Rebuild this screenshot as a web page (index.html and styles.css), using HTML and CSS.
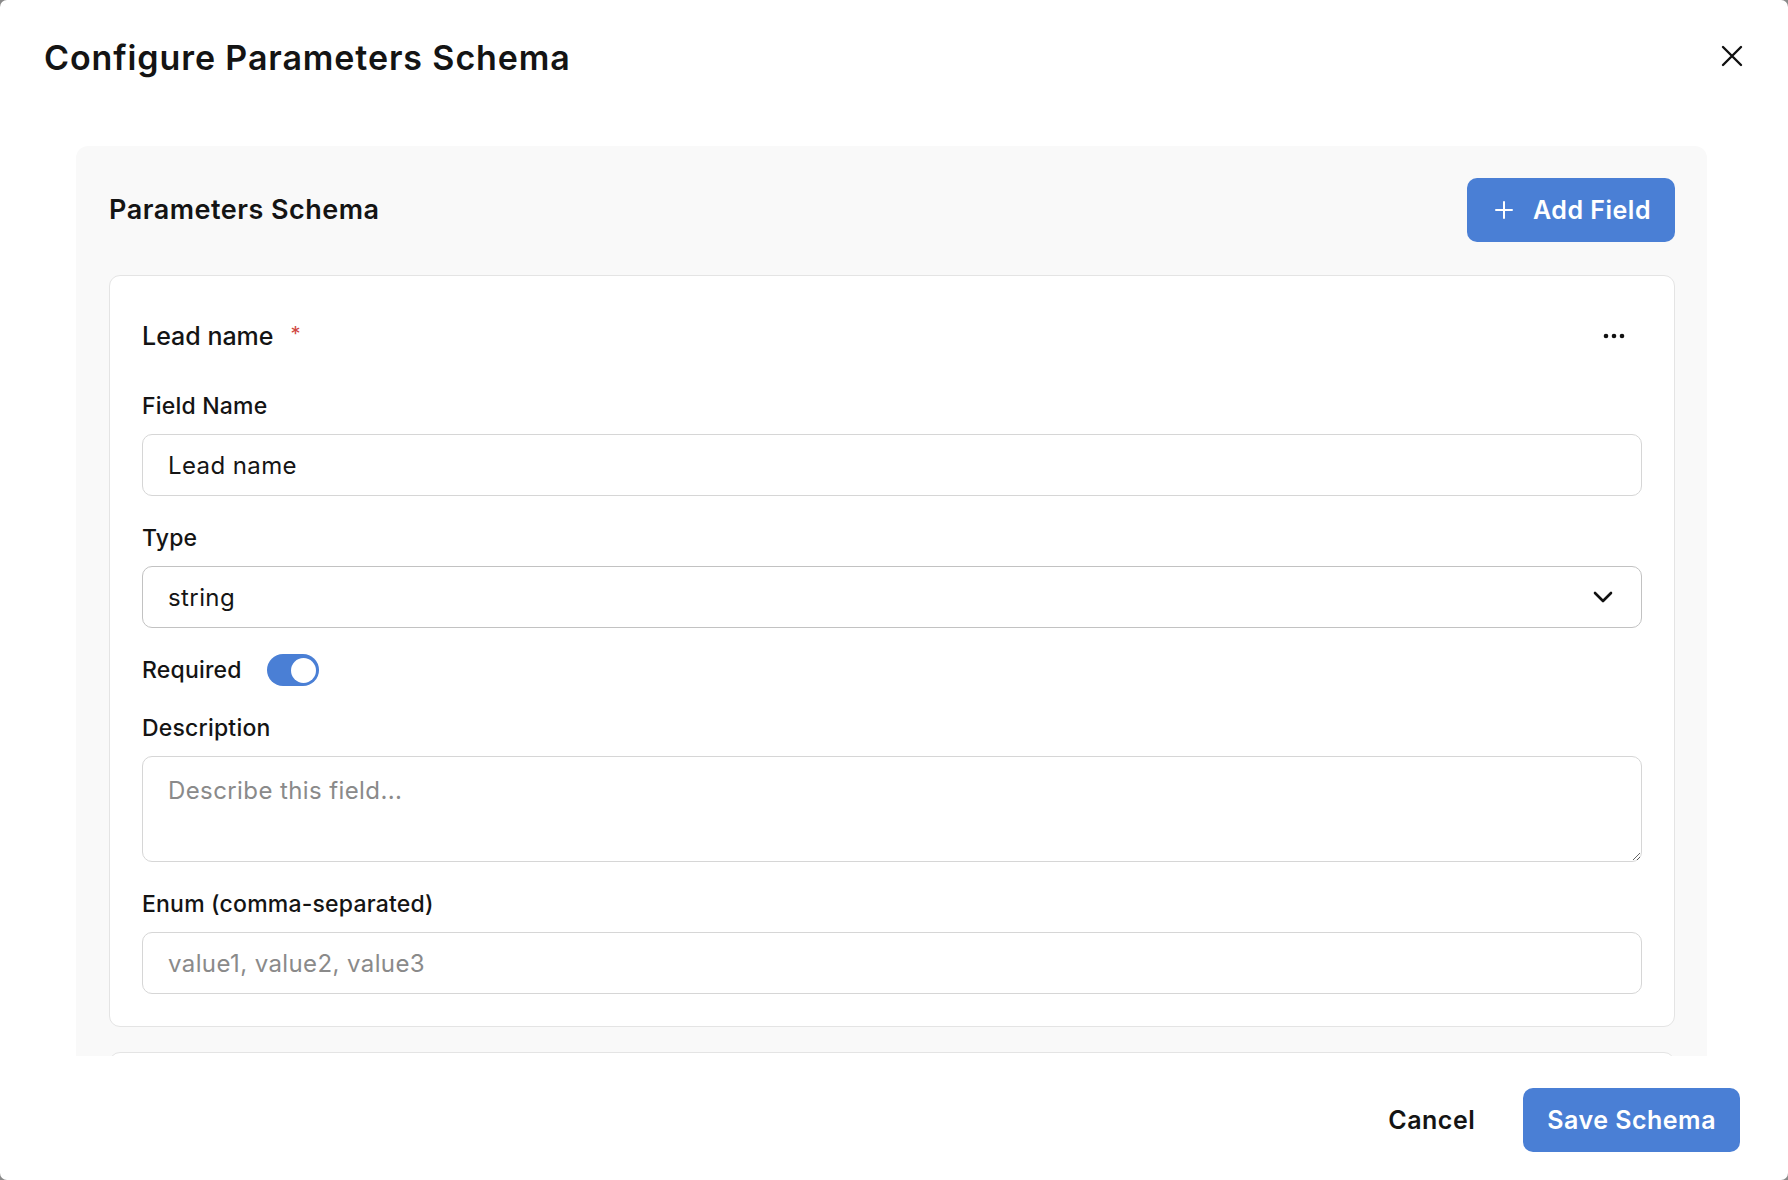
FILE: index.html
```html
<!DOCTYPE html>
<html lang="en">
<head>
<meta charset="utf-8">
<title>Configure Parameters Schema</title>
<link rel="stylesheet" href="styles.css">
</head>
<body>
<div class="modal" role="dialog" aria-labelledby="modal-title">
  <header class="modal-header">
    <h1 id="modal-title" class="modal-title">Configure Parameters Schema</h1>
    <button class="icon-btn close-btn" aria-label="Close">
      <svg viewBox="0 0 24 24" width="24" height="24" fill="none" stroke="currentColor" stroke-width="2.4" stroke-linecap="round"><path d="M3 3 21 21M21 3 3 21"/></svg>
    </button>
  </header>

  <div class="modal-body">
    <section class="schema-panel">
      <div class="panel-head">
        <h2 class="panel-title">Parameters Schema</h2>
        <button class="btn btn-primary add-btn">
          <svg viewBox="0 0 20 20" width="20" height="20" fill="none" stroke="currentColor" stroke-width="2" stroke-linecap="round"><path d="M10 2v16M2 10h16"/></svg>
          <span>Add Field</span>
        </button>
      </div>

      <div class="field-card">
        <div class="card-head">
          <span class="card-title">Lead name</span>
          <span class="req-mark">*</span>
          <button class="icon-btn more-btn" aria-label="More options">
            <svg viewBox="0 0 22 6" width="22" height="6" fill="currentColor"><circle cx="3" cy="3" r="2.3"/><circle cx="11" cy="3" r="2.3"/><circle cx="19" cy="3" r="2.3"/></svg>
          </button>
        </div>

        <label class="field">
          <span class="field-label">Field Name</span>
          <input class="control" type="text" value="Lead name">
        </label>

        <label class="field">
          <span class="field-label">Type</span>
          <span class="select-wrap">
            <select class="control select">
              <option selected>string</option>
              <option>number</option>
              <option>boolean</option>
            </select>
            <svg class="chevron" viewBox="0 0 20 12" width="20" height="12" fill="none" stroke="currentColor" stroke-width="2.6" stroke-linecap="round" stroke-linejoin="round"><path d="M2 2l8 8 8-8"/></svg>
          </span>
        </label>

        <div class="toggle-row">
          <span class="field-label">Required</span>
          <span class="toggle is-on" role="switch" aria-checked="true"><span class="knob"></span></span>
        </div>

        <label class="field">
          <span class="field-label">Description</span>
          <textarea class="control textarea" placeholder="Describe this field..."></textarea>
        </label>

        <label class="field">
          <span class="field-label">Enum (comma-separated)</span>
          <input class="control" type="text" placeholder="value1, value2, value3">
        </label>
      </div>

      <div class="field-card field-card-next"></div>
    </section>
  </div>

  <footer class="modal-footer">
    <button class="btn btn-ghost">Cancel</button>
    <button class="btn btn-primary save-btn">Save Schema</button>
  </footer>
</div>
</body>
</html>
```

FILE: styles.css
```css
* { box-sizing: border-box; }

html, body {
  margin: 0;
  height: 100%;
}

body {
  background: #8a8a8a;
  font-family: Inter, "Noto Sans", "Liberation Sans", sans-serif;
  color: #141414;
  overflow: hidden;
}

button, input, select, textarea {
  font: inherit;
  color: inherit;
}

.modal {
  width: 100%;
  height: 100vh;
  background: #ffffff;
  border-radius: 7px;
  display: flex;
  flex-direction: column;
  overflow: hidden;
}

/* header */
.modal-header {
  display: flex;
  justify-content: space-between;
  align-items: flex-start;
  padding: 36px 42px 0 44px;
  height: 146px;
}

.modal-title {
  margin: 0;
  font-size: 34px;
  line-height: 44px;
  font-weight: 600;
  letter-spacing: 0.9px;
}

.icon-btn {
  border: 0;
  background: transparent;
  padding: 0;
  display: inline-flex;
  align-items: center;
  justify-content: center;
  cursor: pointer;
}

.close-btn {
  width: 28px;
  height: 28px;
  margin-top: 6px;
  color: #111;
}

/* scrolling body */
.modal-body {
  flex: 1;
  overflow: hidden;
  padding: 0 81px 0 76px;
}

.schema-panel {
  background: #f9f9f9;
  border-radius: 12px;
  padding: 32px 32px 40px 33px;
}

.panel-head {
  display: flex;
  align-items: center;
  justify-content: space-between;
  margin-bottom: 33px;
}

.panel-title {
  margin: 0;
  font-size: 27px;
  font-weight: 600;
  line-height: 34px;
  letter-spacing: 0.5px;
}

.btn {
  border: 0;
  border-radius: 10px;
  font-weight: 600;
  font-size: 25px;
  line-height: 32px;
  letter-spacing: 0.5px;
  cursor: pointer;
  display: inline-flex;
  align-items: center;
}

.btn-primary {
  background: #4a7fd5;
  color: #ffffff;
}

.add-btn {
  height: 64px;
  padding: 0 24px 0 27px;
  gap: 19px;
}

.add-btn svg { width: 20px; height: 20px; }

/* field card */
.field-card {
  background: #ffffff;
  border: 1.5px solid #e4e4e4;
  border-radius: 11px;
  padding: 32px;
  display: flex;
  flex-direction: column;
  gap: 26px;
}

.field-card-next {
  margin-top: 25px;
  height: 80px;
}

.card-head {
  display: flex;
  align-items: center;
  height: 56px;
}

.card-title {
  font-size: 25px;
  font-weight: 500;
}

.req-mark {
  color: #d0473f;
  font-size: 20px;
  margin-left: 17px;
  align-self: flex-start;
  margin-top: 14px;
}

.more-btn {
  margin-left: auto;
  width: 56px;
  height: 56px;
  color: #111;
}

.field {
  display: flex;
  flex-direction: column;
  gap: 12px;
}

.field-label {
  font-size: 23px;
  font-weight: 500;
  line-height: 32px;
  letter-spacing: 0.2px;
}

.control {
  width: 100%;
  height: 62px;
  border: 1.5px solid #d6d6d6;
  border-radius: 10px;
  background: #ffffff;
  padding: 0 25px;
  font-size: 24px;
  letter-spacing: 0.4px;
  color: #151515;
  outline: none;
}

.control::placeholder { color: #8a8a8a; }

.select-wrap {
  position: relative;
  display: block;
}

.select {
  appearance: none;
  -webkit-appearance: none;
  border-color: #c2c2c2;
}

.chevron {
  position: absolute;
  right: 29px;
  top: 25px;
  color: #111;
  pointer-events: none;
}

.toggle-row {
  display: flex;
  align-items: center;
  gap: 25px;
  height: 32px;
}

.toggle {
  width: 52px;
  height: 32px;
  border-radius: 16px;
  background: #4a7fd5;
  display: inline-flex;
  align-items: center;
  padding: 3px;
  justify-content: flex-end;
}

.knob {
  width: 25px;
  height: 25px;
  border-radius: 50%;
  background: #ffffff;
}

.textarea {
  height: 106px;
  padding: 16px 25px;
  line-height: 36px;
  resize: vertical;
  display: block;
}

/* footer */
.modal-footer {
  display: flex;
  justify-content: flex-end;
  align-items: flex-start;
  gap: 24px;
  padding: 32px 48px 0 0;
  height: 124px;
}

.btn-ghost {
  background: transparent;
  color: #141414;
  height: 64px;
  padding: 0 24px;
}

.save-btn {
  height: 64px;
  padding: 0 24px;
}
```
